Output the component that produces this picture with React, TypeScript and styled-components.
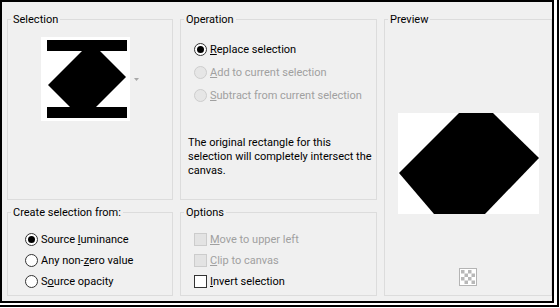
import { createGlobalStyle, styled } from "styled-components";

const GlobalStyle = createGlobalStyle`
  html, body {
    margin: 0;
    padding: 0;
    background: #fff;
  }
  body {
    font-family: Roboto, "Liberation Sans", sans-serif;
    font-size: 11px;
    color: #000;
  }
`;

const Radio = ({
  checked,
  disabled,
  children,
}: {
  checked?: boolean;
  disabled?: boolean;
  children: React.ReactNode;
}) => (
  <Row $disabled={disabled}>
    <Circle $checked={checked} $disabled={disabled} />
    <span>{children}</span>
  </Row>
);

const Check = ({
  disabled,
  children,
}: {
  disabled?: boolean;
  children: React.ReactNode;
}) => (
  <Row $disabled={disabled}>
    <Box $disabled={disabled} />
    <span>{children}</span>
  </Row>
);

const App = () => {
  return (
    <>
      <GlobalStyle />
      <Shadow>
        <Frame>
          <GroupBox>
            <Legend>Selection</Legend>
            <ThumbRow>
              <svg width="89" height="84" viewBox="0 0 89 84">
                <rect width="89" height="84" fill="#fff" />
                <polygon points="50,5 85,40 55,70 29,70 7,48" fill="#000" />
                <rect x="6" y="3" width="80" height="11" fill="#000" />
                <rect x="6" y="70" width="80" height="11" fill="#000" />
              </svg>
              <svg width="5" height="3" viewBox="0 0 5 3">
                <polygon points="0,0 5,0 2.5,3" fill="#a8a8a8" />
              </svg>
            </ThumbRow>
          </GroupBox>

          <GroupBox>
            <Legend>Operation</Legend>
            <OptionList $pad={13} $top={11} $step={23}>
              <Radio checked>
                <U>R</U>eplace selection
              </Radio>
              <Radio disabled>
                <U>A</U>dd to current selection
              </Radio>
              <Radio disabled>
                <U>S</U>ubtract from current selection
              </Radio>
            </OptionList>
            <Note>
              The original rectangle for this
              <br />
              selection will completely intersect the
              <br />
              canvas.
            </Note>
          </GroupBox>

          <PreviewBox>
            <Legend>Preview</Legend>
            <PreviewArea>
              <svg width="141" height="101" viewBox="0 0 141 101">
                <rect width="141" height="101" fill="#fff" />
                <polygon
                  points="61,0 95,0 141,45 87,101 36,101 1,60"
                  fill="#000"
                />
              </svg>
              <Checker>
                <svg width="18" height="18" viewBox="0 0 18 18">
                  <rect x="0.5" y="0.5" width="17" height="17" fill="#fff" stroke="#b4b4b4" />
                  {[0, 1, 2, 3].flatMap((r) =>
                    [0, 1, 2, 3].map((c) =>
                      (r + c) % 2 === 0 ? (
                        <rect
                          key={`${r}-${c}`}
                          x={2 + c * 3.5}
                          y={2 + r * 3.5}
                          width="3.5"
                          height="3.5"
                          fill="#b8b8b8"
                        />
                      ) : null
                    )
                  )}
                </svg>
              </Checker>
            </PreviewArea>
          </PreviewBox>

          <GroupBox>
            <Legend>Create selection from:</Legend>
            <OptionList $pad={17} $top={9} $step={21}>
              <Radio checked>
                Source <U>l</U>uminance
              </Radio>
              <Radio>
                Any non-<U>z</U>ero value
              </Radio>
              <Radio>
                S<U>o</U>urce opacity
              </Radio>
            </OptionList>
          </GroupBox>

          <GroupBox>
            <Legend>Options</Legend>
            <OptionList $pad={13} $top={9} $step={21}>
              <Check disabled>
                <U>M</U>ove to upper left
              </Check>
              <Check disabled>
                <U>C</U>lip to canvas
              </Check>
              <Check>
                <U>I</U>nvert selection
              </Check>
            </OptionList>
          </GroupBox>
        </Frame>
      </Shadow>
    </>
  );
};

export default App;

const Shadow = styled.div`
  width: 557px;
  height: 305px;
  border-right: 2px solid #000;
  border-bottom: 2px solid #000;
  background: #fff;
`;

const Frame = styled.div`
  box-sizing: border-box;
  width: 554px;
  height: 303px;
  border: 2px solid #000;
  background: #f0f0f0;
  padding: 10px 0 5px 5px;
  display: grid;
  grid-template-columns: 166px 197px 168px;
  grid-template-rows: 188px 91px;
  column-gap: 7px;
  row-gap: 5px;
`;

const GroupBox = styled.fieldset`
  margin: 0;
  padding: 0;
  min-width: 0;
  border: 1px solid #dcdcdc;
  display: flex;
  flex-direction: column;
`;

const PreviewBox = styled(GroupBox)`
  grid-column: 3;
  grid-row: 1 / 3;
`;

const Legend = styled.legend`
  margin-left: 3px;
  padding: 0 2px;
  line-height: 15px;
  font-size: 11px;
`;

const ThumbRow = styled.div`
  display: flex;
  justify-content: center;
  align-items: center;
  gap: 4px;
  margin-top: 10px;
`;

const OptionList = styled.div<{ $pad: number; $top: number; $step: number }>`
  display: grid;
  grid-auto-rows: ${(p) => p.$step}px;
  align-items: center;
  padding: ${(p) => p.$top}px 0 0 ${(p) => p.$pad}px;
`;

const Row = styled.label<{ $disabled?: boolean }>`
  display: flex;
  align-items: center;
  gap: 3px;
  color: ${(p) => (p.$disabled ? "#a0a0a0" : "#000")};
  white-space: nowrap;
`;

const Circle = styled.span<{ $checked?: boolean; $disabled?: boolean }>`
  box-sizing: border-box;
  width: 13px;
  height: 13px;
  border-radius: 50%;
  border: 1px solid ${(p) => (p.$disabled ? "#cdcdcd" : "#333")};
  background: ${(p) => (p.$disabled ? "#e6e6e6" : "#fff")};
  display: flex;
  align-items: center;
  justify-content: center;
  flex-shrink: 0;
  &::after {
    content: "";
    width: 7px;
    height: 7px;
    border-radius: 50%;
    background: #000;
    display: ${(p) => (p.$checked ? "block" : "none")};
  }
`;

const Box = styled.span<{ $disabled?: boolean }>`
  box-sizing: border-box;
  width: 13px;
  height: 13px;
  border: 1px solid ${(p) => (p.$disabled ? "#cccccc" : "#333")};
  background: ${(p) => (p.$disabled ? "#e3e3e3" : "#fff")};
  flex-shrink: 0;
`;

const U = styled.span`
  text-decoration: underline;
`;

const Note = styled.p`
  margin: 29px 0 0;
  padding-left: 7px;
  line-height: 14px;
  white-space: nowrap;
`;

const PreviewArea = styled.div`
  display: flex;
  flex-direction: column;
  align-items: center;
  padding-top: 86px;
`;

const Checker = styled.div`
  margin-top: 54px;
  display: flex;
`;
